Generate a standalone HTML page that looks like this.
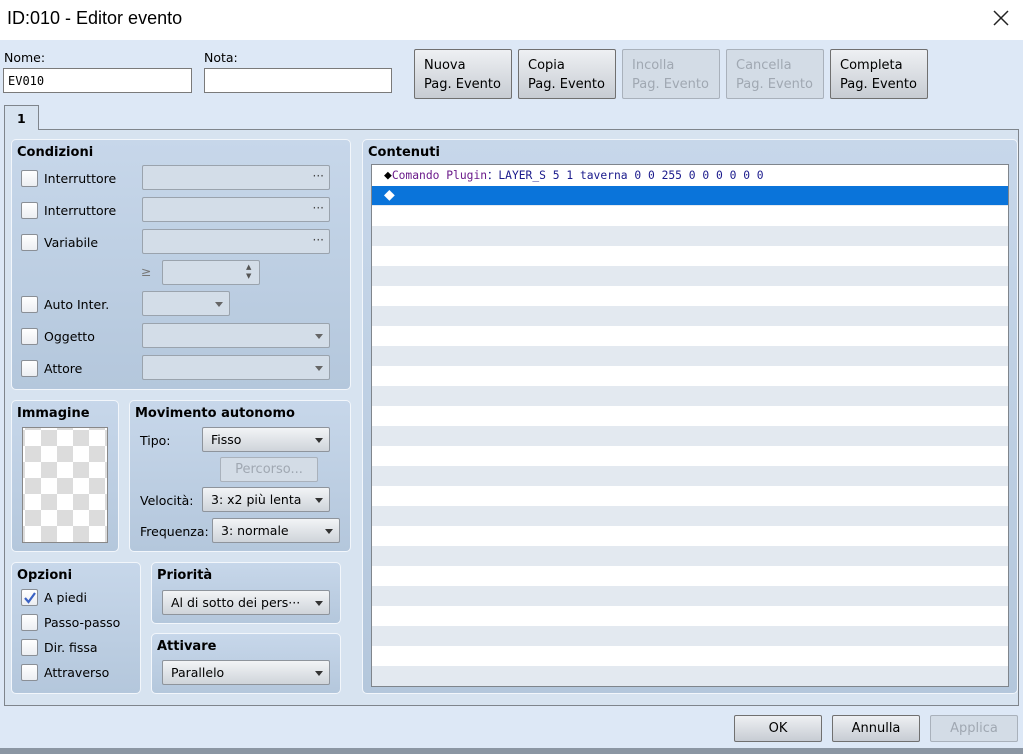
<!DOCTYPE html>
<html><head><meta charset="utf-8"><style>
*{box-sizing:border-box;margin:0;padding:0}
body{width:1023px;height:754px;overflow:hidden;background:#dde8f6;font-family:"DejaVu Sans","Liberation Sans",sans-serif;font-size:12.5px;color:#000;position:relative}
.a{position:absolute}
.title{left:0;top:0;width:1023px;height:40px;background:#fff;font-family:"Liberation Sans",sans-serif;font-size:18px;line-height:36px;padding-left:7px}
.inp{background:#fff;border:1px solid #7a7a7a;font-family:"DejaVu Sans Mono",monospace;font-size:12px;padding:5px 4px}
.btn{border:1px solid #707070;border-radius:2px;background:linear-gradient(#eef0f3,#c7ccd3);font-size:13px;line-height:19px;padding:6px 9px;white-space:nowrap}
.btn.d{color:#a0a8b2;background:#d3dce6;border-color:#a9b1bb}
.grp{border:1px solid #f2f6fb;border-radius:5px;background:linear-gradient(#c7d7ea,#b4c7dc)}
.grp b{position:absolute;left:5px;top:5px;font-size:13px}
.cb{width:17px;height:17px;border:1px solid #8a8f96;border-radius:2px;background:linear-gradient(#fff,#eceef2)}
.lbl{font-size:12.5px}
.fld{border:1px solid #9aa3ad;border-radius:2px;background:#d3dde8;height:25px}
.dd{border:1px solid #8e949c;border-radius:2px;background:linear-gradient(#f2f4f6,#cfd4da);height:25px;padding:4px 8px;font-size:12.5px;white-space:nowrap}
.dd:after{content:"";position:absolute;right:6px;top:10px;border:4px solid transparent;border-top:5px solid #333;border-bottom:0}
.dd.e{background:#d3dde8;border-color:#9aa3ad}
.dd.e:after{border-top-color:#666}
.dots:after{content:"···";position:absolute;right:5px;top:3px;font-size:12px;color:#444}
</style></head><body>
<div class="a title">ID:010 - Editor evento</div>
<svg class="a" style="left:992px;top:9px" width="18" height="18"><path d="M2 2L16 16M16 2L2 16" stroke="#222" stroke-width="1.5"/></svg>

<div class="a" style="left:4px;top:50px">Nome:</div>
<div class="a" style="left:204px;top:50px">Nota:</div>
<div class="a inp" style="left:3px;top:68px;width:189px;height:25px">EV010</div>
<div class="a inp" style="left:204px;top:68px;width:188px;height:25px"></div>

<div class="a btn" style="left:414px;top:49px;width:98px;height:50px">Nuova<br>Pag. Evento</div>
<div class="a btn" style="left:518px;top:49px;width:98px;height:50px">Copia<br>Pag. Evento</div>
<div class="a btn d" style="left:622px;top:49px;width:98px;height:50px">Incolla<br>Pag. Evento</div>
<div class="a btn d" style="left:726px;top:49px;width:98px;height:50px">Cancella<br>Pag. Evento</div>
<div class="a btn" style="left:830px;top:49px;width:98px;height:50px">Completa<br>Pag. Evento</div>

<div class="a" style="left:4px;top:129px;width:1015px;height:577px;border:1px solid #7f858c;background:#d7e3f0"></div>
<div class="a" style="left:4px;top:105px;width:35px;height:25px;border:1px solid #7f858c;border-bottom:none;background:#d7e3f0;font-weight:bold;padding:5px 0 0 12px">1</div>

<div class="a grp" style="left:11px;top:139px;width:340px;height:251px"><b>Condizioni</b></div>
<div class="a cb" style="left:21px;top:170px"></div><div class="a lbl" style="left:44px;top:171px">Interruttore</div>
<div class="a fld dots" style="left:142px;top:165px;width:188px"></div>
<div class="a cb" style="left:21px;top:202px"></div><div class="a lbl" style="left:44px;top:203px">Interruttore</div>
<div class="a fld dots" style="left:142px;top:197px;width:188px"></div>
<div class="a cb" style="left:21px;top:234px"></div><div class="a lbl" style="left:44px;top:235px">Variabile</div>
<div class="a fld dots" style="left:142px;top:229px;width:188px"></div>
<div class="a" style="left:141px;top:264px;color:#777">≥</div>
<div class="a fld" style="left:162px;top:260px;width:98px"></div>
<div class="a" style="left:246px;top:263px;font-size:7px;color:#555;line-height:9px">▲<br>▼</div>
<div class="a cb" style="left:21px;top:296px"></div><div class="a lbl" style="left:44px;top:297px">Auto Inter.</div>
<div class="a dd e" style="left:142px;top:291px;width:88px"></div>
<div class="a cb" style="left:21px;top:328px"></div><div class="a lbl" style="left:44px;top:329px">Oggetto</div>
<div class="a dd e" style="left:142px;top:323px;width:188px"></div>
<div class="a cb" style="left:21px;top:360px"></div><div class="a lbl" style="left:44px;top:361px">Attore</div>
<div class="a dd e" style="left:142px;top:355px;width:188px"></div>

<div class="a grp" style="left:11px;top:400px;width:108px;height:152px"><b>Immagine</b></div>
<div class="a" style="left:22px;top:427px;width:86px;height:116px;border:1px solid #888;background-color:#fff;background-image:linear-gradient(45deg,#dcdcdc 25%,transparent 25%,transparent 75%,#dcdcdc 75%),linear-gradient(45deg,#dcdcdc 25%,transparent 25%,transparent 75%,#dcdcdc 75%);background-size:32px 32px;background-position:2px 2px,18px 18px"></div>

<div class="a grp" style="left:129px;top:400px;width:222px;height:152px"><b>Movimento autonomo</b></div>
<div class="a lbl" style="left:140px;top:433px">Tipo:</div>
<div class="a dd" style="left:202px;top:427px;width:128px">Fisso</div>
<div class="a btn d" style="left:220px;top:457px;width:98px;height:25px;padding:2px 0;text-align:center">Percorso...</div>
<div class="a lbl" style="left:140px;top:493px">Velocità:</div>
<div class="a dd" style="left:202px;top:487px;width:128px">3: x2 più lenta</div>
<div class="a lbl" style="left:140px;top:524px">Frequenza:</div>
<div class="a dd" style="left:212px;top:518px;width:128px">3: normale</div>

<div class="a grp" style="left:11px;top:562px;width:130px;height:132px"><b>Opzioni</b></div>
<div class="a cb" style="left:21px;top:589px"></div>
<svg class="a" style="left:23px;top:591px" width="14" height="14"><path d="M2 7L5.5 11L12 2" stroke="#3a62c4" stroke-width="2.2" fill="none"/></svg>
<div class="a lbl" style="left:44px;top:590px">A piedi</div>
<div class="a cb" style="left:21px;top:614px"></div><div class="a lbl" style="left:44px;top:615px">Passo-passo</div>
<div class="a cb" style="left:21px;top:639px"></div><div class="a lbl" style="left:44px;top:640px">Dir. fissa</div>
<div class="a cb" style="left:21px;top:664px"></div><div class="a lbl" style="left:44px;top:665px">Attraverso</div>

<div class="a grp" style="left:151px;top:562px;width:190px;height:62px"><b>Priorità</b></div>
<div class="a dd" style="left:162px;top:590px;width:168px">Al di sotto dei pers···</div>
<div class="a grp" style="left:151px;top:633px;width:190px;height:61px"><b>Attivare</b></div>
<div class="a dd" style="left:162px;top:660px;width:168px">Parallelo</div>

<div class="a grp" style="left:362px;top:139px;width:656px;height:555px"><b>Contenuti</b></div>
<div class="a" style="left:371px;top:164px;width:638px;height:523px;border:1px solid #7f858c;background:repeating-linear-gradient(#fff 0,#fff 20px,#e3e9f0 20px,#e3e9f0 40px);background-position:0 1px;overflow:hidden">
<div style="height:21px;background:#fff;font-family:'DejaVu Sans Mono',monospace;font-size:11.3px;line-height:21px;padding-left:12px;color:#1a1a8c;white-space:pre"><span style="color:#000;font-size:13px">◆</span><span style="color:#6a1a8a">Comando Plugin</span>：LAYER_S 5 1 taverna 0 0 255 0 0 0 0 0 0</div>
<div style="height:19px;background:#0a74da;color:#fff;font-size:14px;line-height:19px;padding-left:12px">◆</div>
</div>

<div class="a btn" style="left:734px;top:715px;width:88px;height:27px;padding:3px 0;text-align:center">OK</div>
<div class="a btn" style="left:832px;top:715px;width:88px;height:27px;padding:3px 0;text-align:center">Annulla</div>
<div class="a btn d" style="left:930px;top:715px;width:88px;height:27px;padding:3px 0;text-align:center">Applica</div>
<div class="a" style="left:0;top:748px;width:1023px;height:6px;background:#8b96a3"></div>
</body></html>
